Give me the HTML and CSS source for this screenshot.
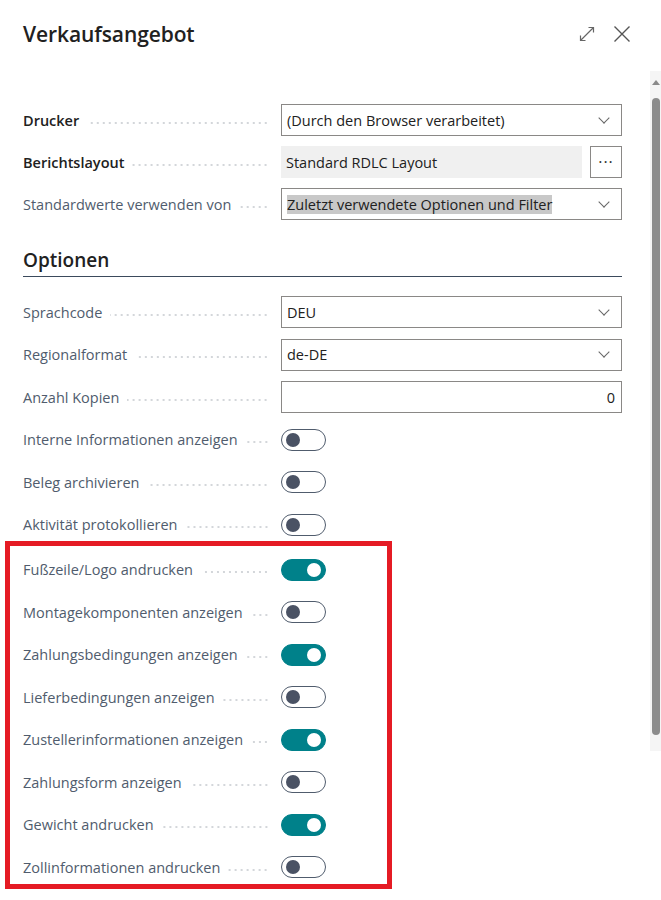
FILE: index.html
```html
<!DOCTYPE html>
<html lang="de">
<head>
<meta charset="utf-8">
<title>Verkaufsangebot</title>
<link rel="stylesheet" href="styles.css">
</head>
<body>
<div class="page">
  <main class="main">
    <header class="header">
      <h1 class="title">Verkaufsangebot</h1>
      <div class="header-icons">
        <svg class="icon" width="20" height="20" viewBox="0 0 20 20"><path d="M3.5 16.5 L16.5 3.5 M11.5 3.5 H16.5 V8.5 M3.5 11.5 V16.5 H8.5" fill="none" stroke="#666" stroke-width="1.2"/></svg>
        <svg class="icon" width="20" height="20" viewBox="0 0 20 20"><path d="M2.5 2.5 L17.5 17.5 M17.5 2.5 L2.5 17.5" fill="none" stroke="#555" stroke-width="1.4"/></svg>
      </div>
    </header>

    <section class="form">
      <div class="row">
        <div class="label strong"><span class="lt">Drucker</span><span class="dots"></span></div>
        <div class="field select"><span class="val">(Durch den Browser verarbeitet)</span><span class="chev"></span></div>
      </div>
      <div class="row">
        <div class="label strong"><span class="lt">Berichtslayout</span><span class="dots"></span></div>
        <div class="field-group">
          <div class="field readonly"><span class="val">Standard RDLC Layout</span></div>
          <div class="more">&middot;&middot;&middot;</div>
        </div>
      </div>
      <div class="row">
        <div class="label"><span class="lt">Standardwerte verwenden von</span><span class="dots"></span></div>
        <div class="field select"><span class="val highlighted">Zuletzt verwendete Optionen und Filter</span><span class="chev"></span></div>
      </div>
    </section>

    <h2 class="section-title">Optionen</h2>

    <section class="form options">
      <div class="row">
        <div class="label"><span class="lt">Sprachcode</span><span class="dots"></span></div>
        <div class="field select"><span class="val">DEU</span><span class="chev"></span></div>
      </div>
      <div class="row">
        <div class="label"><span class="lt">Regionalformat</span><span class="dots"></span></div>
        <div class="field select"><span class="val">de-DE</span><span class="chev"></span></div>
      </div>
      <div class="row">
        <div class="label"><span class="lt">Anzahl Kopien</span><span class="dots"></span></div>
        <div class="field number"><span class="val">0</span></div>
      </div>
      <div class="row">
        <div class="label"><span class="lt">Interne Informationen anzeigen</span><span class="dots"></span></div>
        <div class="toggle"></div>
      </div>
      <div class="row">
        <div class="label"><span class="lt">Beleg archivieren</span><span class="dots"></span></div>
        <div class="toggle"></div>
      </div>
      <div class="row">
        <div class="label"><span class="lt">Aktivität protokollieren</span><span class="dots"></span></div>
        <div class="toggle"></div>
      </div>

      <div class="highlight-box">
        <div class="row">
          <div class="label"><span class="lt">Fußzeile/Logo andrucken</span><span class="dots"></span></div>
          <div class="toggle on"></div>
        </div>
        <div class="row">
          <div class="label"><span class="lt">Montagekomponenten anzeigen</span><span class="dots"></span></div>
          <div class="toggle"></div>
        </div>
        <div class="row">
          <div class="label"><span class="lt">Zahlungsbedingungen anzeigen</span><span class="dots"></span></div>
          <div class="toggle on"></div>
        </div>
        <div class="row">
          <div class="label"><span class="lt">Lieferbedingungen anzeigen</span><span class="dots"></span></div>
          <div class="toggle"></div>
        </div>
        <div class="row">
          <div class="label"><span class="lt">Zustellerinformationen anzeigen</span><span class="dots"></span></div>
          <div class="toggle on"></div>
        </div>
        <div class="row">
          <div class="label"><span class="lt">Zahlungsform anzeigen</span><span class="dots"></span></div>
          <div class="toggle"></div>
        </div>
        <div class="row">
          <div class="label"><span class="lt">Gewicht andrucken</span><span class="dots"></span></div>
          <div class="toggle on"></div>
        </div>
        <div class="row">
          <div class="label"><span class="lt">Zollinformationen andrucken</span><span class="dots"></span></div>
          <div class="toggle"></div>
        </div>
      </div>
    </section>
  </main>
  <aside class="scrollbar">
    <div class="arrow"></div>
    <div class="thumb"></div>
  </aside>
</div>
</body>
</html>
```

FILE: styles.css
```css
* { box-sizing: border-box; }
html, body { margin: 0; padding: 0; background: #fff; }
body {
  font-family: "Open Sans", "Noto Sans", sans-serif;
  color: #212121;
  font-size: 14.5px;
}
.page {
  display: flex;
  width: 661px;
  height: 900px;
  overflow: hidden;
}
.main {
  width: 650px;
  flex: none;
}
.header {
  display: flex;
  align-items: center;
  justify-content: space-between;
  height: 68px;
  padding: 0 18px 0 23px;
}
.title {
  margin: 0;
  font-size: 21px;
  font-weight: 600;
  color: #212121;
  letter-spacing: -0.1px;
}
.header-icons {
  display: flex;
  gap: 15px;
  align-items: center;
}
.icon { display: block; }

.form {
  display: flex;
  flex-direction: column;
  gap: 10px;
  padding: 36px 28px 0 23px;
}
.row {
  display: flex;
  align-items: center;
  height: 32px;
}
.label {
  width: 258px;
  flex: none;
  display: flex;
  align-items: center;
  color: #505c6d;
  white-space: nowrap;
}
.label.strong { color: #212121; font-weight: 600; }
.lt { flex: none; }
.dots {
  flex: 1;
  height: 2px;
  margin: 5px 12px 0 8px;
  background-image: radial-gradient(circle, #c4c8cd 0.6px, transparent 1px);
  background-size: 6px 2px;
  background-repeat: repeat-x;
  background-position: right center;
}
.field {
  width: 341px;
  height: 32px;
  border: 1px solid #8a8886;
  display: flex;
  align-items: center;
  padding: 0 5px;
  color: #212121;
}
.field-group {
  display: flex;
  align-items: center;
  gap: 8px;
}
.field.readonly {
  width: 301px;
  border: none;
  background: #f0f0f0;
}
.more {
  width: 32px;
  height: 32px;
  border: 1px solid #8a8886;
  display: flex;
  align-items: center;
  justify-content: center;
  font-size: 16px;
  letter-spacing: 1px;
  color: #333;
  line-height: 1;
}
.select { justify-content: space-between; }
.val { white-space: nowrap; }
.val.highlighted { background: #c8c8c8; }
.chev {
  width: 8px;
  height: 8px;
  border-right: 1px solid #666;
  border-bottom: 1px solid #666;
  transform: rotate(45deg);
  margin: -5px 8px 0 0;
}
.number { justify-content: flex-end; padding-right: 6px; }

.section-title {
  margin: 27px 28px 0 23px;
  font-size: 19px;
  font-weight: 600;
  color: #212121;
  padding-bottom: 3px;
  border-bottom: 1px solid #3b4a5c;
  line-height: 26px;
}
.options { padding-top: 19px; gap: 10.5px; }

.toggle {
  width: 45px;
  height: 22px;
  border: 1px solid #505c6d;
  border-radius: 11px;
  position: relative;
}
.toggle::after {
  content: "";
  position: absolute;
  top: 3px;
  left: 4px;
  width: 14px;
  height: 14px;
  border-radius: 50%;
  background: #4a5264;
}
.toggle.on {
  background: #00818a;
  border-color: #00818a;
}
.toggle.on::after {
  left: auto;
  right: 4px;
  background: #fff;
}

.highlight-box {
  display: flex;
  flex-direction: column;
  gap: 10.5px;
  margin: -10.5px 0 0 -18px;
  width: 387px;
  border: 5px solid #e51b24;
  padding: 8px 0 1px 13px;
}

.scrollbar {
  width: 11px;
  flex: none;
  margin-top: 71px;
  background: #f5f5f5;
  display: flex;
  flex-direction: column;
  align-items: center;
  padding-top: 9px;
  height: 680px;
}
.arrow {
  width: 0;
  height: 0;
  border-left: 4px solid transparent;
  border-right: 4px solid transparent;
  border-bottom: 5px solid #8a8a8a;
}
.thumb {
  margin-top: 13px;
  width: 8px;
  height: 637px;
  border-radius: 4px;
  background: #8c8c8c;
}
```
